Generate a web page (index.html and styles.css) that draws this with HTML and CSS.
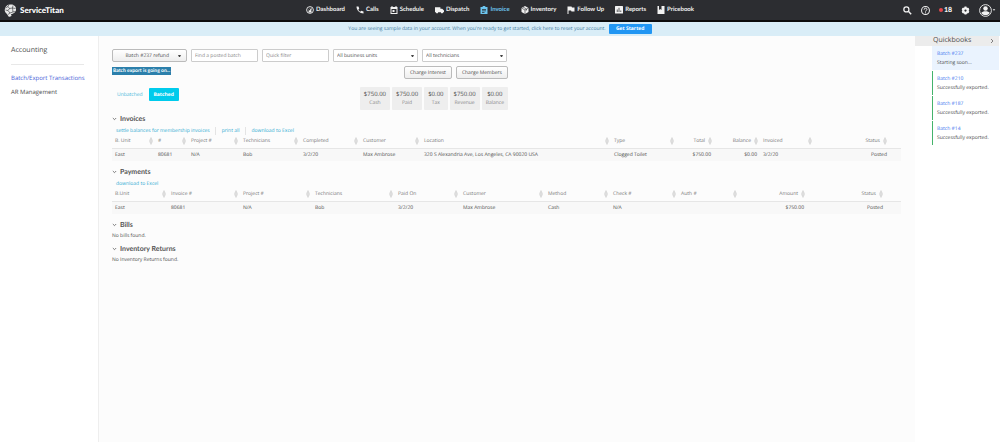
FILE: index.html
```html
<!DOCTYPE html>
<html lang="en">
<head>
<meta charset="utf-8">
<title>ServiceTitan – Batch/Export Transactions</title>
<link rel="stylesheet" href="styles.css">
</head>
<body>
<svg class="defs" aria-hidden="true">
  <symbol id="sort" viewBox="0 0 4 8"><path d="M2 0.5L3.500 3.500H.5zM2 7.500L.5 4.500H3.500z" fill="#ddd" stroke="#c4c4c4" stroke-width=".4"/></symbol>
  <symbol id="chev" viewBox="0 0 6 4"><path d="M1 .8L3 2.8 5 .8" fill="none" stroke="#555" stroke-width=".9"/></symbol>
</svg>
<header class="topbar">
  <a class="brand" href="#">
    <svg class="brand-mark" viewBox="0 0 26 26"><path d="M13 1C8 0 3 4 2 9c-2 5 1 9 4 11l3 5c3 1 6 0 6-2l-1-3c6 0 11-5 10-11C24 4 18 0 13 1z" fill="#e8e8e8"/><path d="M3 8l5-3 3 4-3 4-5-1M11 9l6-1 1-5M8 13l4 5 6-2-1-8M12 18l-4 3M18 16l5-1M8 5l2-4M17 8l6 1" fill="none" stroke="#2c2d31" stroke-width="1.2"/></svg>
    <span>ServiceTitan</span>
  </a>
  <nav class="mainnav">
    <a href="#"><svg viewBox="0 0 16 16"><circle cx="8" cy="8" r="6.8" fill="none" stroke="currentColor" stroke-width="1.8"/><path d="M4 8h2M8 4v2M12 8h-2M5 12.500h6L9.500 9 11 5 7 9z" fill="currentColor" stroke="currentColor"/></svg>Dashboard</a>
    <a href="#"><svg viewBox="0 0 16 16"><path d="M1 1h4l1.500 4.500-2 2c1 2 2.500 3 4 4l2-2L15 11v4C8 15 1 9 1 1z" fill="currentColor"/></svg>Calls</a>
    <a href="#"><svg viewBox="0 0 16 16"><path d="M1 2h2V0h2v2h6V0h2v2h2v14H1zM3 6v8h10V6zM5 8h4v4H5z" fill="currentColor" fill-rule="evenodd"/></svg>Schedule</a>
    <a href="#"><svg class="wide" viewBox="0 0 20 16"><path d="M0 2h12v3h4l4 4v4h-2a2.500 2.500 0 0 1-5 0H7a2.500 2.500 0 0 1-5 0H0z" fill="currentColor"/></svg>Dispatch</a>
    <a class="active" href="#" aria-current="page"><svg viewBox="0 0 16 16"><path d="M1 2h4c0-3 6-3 6 0h4v14H1zM4 6v1.500h8V6zM4 9v1.500h8V9zM4 12v1.500h5V12z" fill="currentColor" fill-rule="evenodd"/></svg>Invoice</a>
    <a href="#"><svg viewBox="0 0 16 16"><path d="M8 0l7 4v8l-7 4-7-4V4z" fill="currentColor"/><path d="M1 4l7 4 7-4M8 8v8M4 2l7 4v3" fill="none" stroke="#2c2d31" stroke-width="1.200"/></svg>Inventory</a>
    <a href="#"><svg viewBox="0 0 16 16"><path d="M1 1h8l1 2h5v8H9L8 9H3v7H1z" fill="currentColor"/></svg>Follow Up</a>
    <a href="#"><svg viewBox="0 0 16 16"><rect width="16" height="15" rx="1" fill="currentColor"/><path d="M4.500 12V7M8 12V3.500M11.500 12V9" stroke="#2c2d31" stroke-width="1.500"/></svg>Reports</a>
    <a href="#"><svg viewBox="0 0 16 16"><path d="M1 0h3v8l2.500-2L9 8V0h6v16H1z" fill="currentColor"/></svg>Pricebook</a>
  </nav>
  <div class="tools">
    <button aria-label="Search"><svg viewBox="0 0 16 16"><circle cx="6" cy="6" r="4.500" fill="none" stroke="currentColor" stroke-width="2.200"/><path d="M9.500 9.500l5 5" stroke="currentColor" stroke-width="2.600"/></svg></button>
    <button aria-label="Help"><svg viewBox="0 0 16 16"><circle cx="8" cy="8" r="7" fill="none" stroke="currentColor" stroke-width="1.800"/><path d="M5.500 6.500c0-3.500 5-3.500 5 0C10.500 8 8 8 8 10M8 11.300v1.700" fill="none" stroke="currentColor" stroke-width="1.700"/></svg></button>
    <button class="alerts" aria-label="Notifications"><i></i>18</button>
    <button aria-label="Settings"><svg viewBox="0 0 16 16"><circle cx="8" cy="8" r="4" fill="none" stroke="currentColor" stroke-width="4"/><path d="M8 1v3M8 12v3M2 4.500l2.500 1.500M11.500 10l2.500 1.500M2 11.500L4.500 10M11.500 6L14 4.500" stroke="currentColor" stroke-width="3.500"/></svg></button>
    <button class="user" aria-label="Account"><svg viewBox="0 0 26 26"><circle cx="13" cy="13" r="11.800" fill="none" stroke="currentColor" stroke-width="1.800"/><circle cx="13" cy="9" r="4.500" fill="currentColor"/><path d="M4.500 18c2-5 15-5 17 0-4 6-13 6-17 0z" fill="currentColor"/></svg><svg class="tiny" viewBox="0 0 6 4"><path d="M1 1h4L3 3z" fill="currentColor"/></svg></button>
  </div>
</header>
<div class="notice"><span>You are seeing sample data in your account. When you're ready to get started, click here to reset your account.</span><button>Get Started</button></div>
<div class="layout">
  <aside class="side">
    <h2>Accounting</h2>
    <nav><a class="current" href="#">Batch/Export Transactions</a><a href="#">AR Management</a></nav>
  </aside>
  <main>
    <div class="filters">
      <button class="btn batch">Batch #237 refund<i class="caret"></i></button>
      <input class="find" type="text" aria-label="Find a posted batch" placeholder="Find a posted batch">
      <input class="quick" type="text" aria-label="Quick filter" placeholder="Quick filter">
      <span class="pick"><select aria-label="Business units"><option>All business units</option></select><i class="caret"></i></span>
      <span class="pick"><select aria-label="Technicians"><option>All technicians</option></select><i class="caret"></i></span>
    </div>
    <div class="actions"><span class="badge">Batch export is going on...</span><div class="charge"><button class="btn">Charge Interest</button><button class="btn">Charge Members</button></div></div>
    <div class="summary">
      <div class="tabs"><button>Unbatched</button><button class="on">Batched</button></div>
      <dl class="totals">
        <div><dd>$750.00</dd><dt>Cash</dt></div><div><dd>$750.00</dd><dt>Paid</dt></div><div><dd>$0.00</dd><dt>Tax</dt></div><div><dd>$750.00</dd><dt>Revenue</dt></div><div><dd>$0.00</dd><dt>Balance</dt></div>
      </dl>
    </div>
    <section>
      <h3><svg><use href="#chev"/></svg>Invoices</h3>
      <div class="links"><a href="#">settle balances for membership invoices</a><a href="#">print all</a><a href="#">download to Excel</a></div>
      <table>
        <colgroup><col class="w43"><col class="w33"><col class="w52"><col class="w60"><col class="w60"><col class="w61"><col class="w190"><col class="w65"><col class="w38"><col class="w46"><col class="w54"><col></colgroup>
        <thead><tr><th><div>B. Unit<svg><use href="#sort"/></svg></div></th><th><div>#<svg><use href="#sort"/></svg></div></th><th><div>Project #<svg><use href="#sort"/></svg></div></th><th><div>Technicians<svg><use href="#sort"/></svg></div></th><th><div>Completed<svg><use href="#sort"/></svg></div></th><th><div>Customer<svg><use href="#sort"/></svg></div></th><th><div>Location<svg><use href="#sort"/></svg></div></th><th><div>Type<svg><use href="#sort"/></svg></div></th><th class="num"><div>Total<svg><use href="#sort"/></svg></div></th><th class="num"><div>Balance<svg><use href="#sort"/></svg></div></th><th><div>Invoiced<svg><use href="#sort"/></svg></div></th><th class="num last"><div>Status<svg><use href="#sort"/></svg></div></th></tr></thead>
        <tbody><tr><td>East</td><td>80681</td><td>N/A</td><td>Bob</td><td>3/2/20</td><td>Max Ambrose</td><td>320 S Alexandria Ave, Los Angeles, CA 90020 USA</td><td>Clogged Toilet</td><td class="num">$750.00</td><td class="num">$0.00</td><td>3/2/20</td><td class="num last">Posted</td></tr></tbody>
      </table>
    </section>
    <section>
      <h3><svg><use href="#chev"/></svg>Payments</h3>
      <div class="links"><a href="#">download to Excel</a></div>
      <table>
        <colgroup><col class="w56"><col class="w72"><col class="w72"><col class="w83"><col class="w65"><col class="w85"><col class="w65"><col class="w68"><col class="w61"><col class="w68"><col></colgroup>
        <thead><tr><th><div>B.Unit<svg><use href="#sort"/></svg></div></th><th><div>Invoice #<svg><use href="#sort"/></svg></div></th><th><div>Project #<svg><use href="#sort"/></svg></div></th><th><div>Technicians<svg><use href="#sort"/></svg></div></th><th><div>Paid On<svg><use href="#sort"/></svg></div></th><th><div>Customer<svg><use href="#sort"/></svg></div></th><th><div>Method<svg><use href="#sort"/></svg></div></th><th><div>Check #<svg><use href="#sort"/></svg></div></th><th><div>Auth #<svg><use href="#sort"/></svg></div></th><th class="num"><div>Amount<svg><use href="#sort"/></svg></div></th><th class="num end"><div>Status<svg><use href="#sort"/></svg></div></th></tr></thead>
        <tbody><tr><td>East</td><td>80681</td><td>N/A</td><td>Bob</td><td>3/2/20</td><td>Max Ambrose</td><td>Cash</td><td>N/A</td><td></td><td class="num">$750.00</td><td class="num end">Posted</td></tr></tbody>
      </table>
    </section>
    <section><h3><svg><use href="#chev"/></svg>Bills</h3><p>No bills found.</p></section>
    <section><h3><svg><use href="#chev"/></svg>Inventory Returns</h3><p>No Inventory Returns found.</p></section>
  </main>
  <aside class="books">
    <h2>Quickbooks<button aria-label="Collapse"><svg viewBox="0 0 4 6"><path d="M1 1l2 2-2 2" fill="none" stroke="#666" stroke-width=".8"/></svg></button></h2>
    <ul>
      <li class="pending"><a href="#">Batch #237</a><span>Starting soon...</span></li>
      <li><a href="#">Batch #210</a><span>Successfully exported.</span></li>
      <li><a href="#">Batch #187</a><span>Successfully exported.</span></li>
      <li><a href="#">Batch #14</a><span>Successfully exported.</span></li>
    </ul>
  </aside>
</div>
</body>
</html>
```
FILE: styles.css
```css
*{box-sizing:border-box}
body{margin:0;min-height:100vh;display:flex;flex-direction:column;background:#fcfcfc;color:#4c4c4c;font:5px/8px "Open Sans","Noto Sans",sans-serif;text-rendering:geometricPrecision}
button,input,select{font:inherit;color:inherit;margin:0;text-rendering:inherit}
button{padding:0;border:0;background:none;white-space:nowrap}
a{color:inherit;text-decoration:none}
h2,h3,p,dl,dd,dt,ul{margin:0;padding:0;font-weight:400}
.defs{position:absolute;width:0;height:0}
.topbar{height:22px;display:flex;align-items:center;justify-content:space-between;background:#2c2d31;border-bottom:2px solid #0c0c0d;color:#f2f2f2;padding:0 4px}
.brand{display:flex;align-items:center;gap:3px;flex:1;font:900 8px/12px Lato,sans-serif;color:#fff}
.brand-mark{width:13px;height:13px}
.mainnav{display:flex;gap:11px;font:700 6px/10px Lato,sans-serif}
.mainnav a{display:flex;align-items:center;gap:2px;white-space:nowrap}
.mainnav svg{width:8px;height:8px}
.mainnav .wide{width:9px}
.mainnav .active{color:#6cc5ef}
.tools{flex:1;display:flex;align-items:center;justify-content:flex-end;gap:9px}
.tools button{display:flex;align-items:center}
.tools svg{width:9px;height:9px}
.tools .alerts{font:900 7px/10px Lato,sans-serif;gap:1px}
.alerts i{width:4px;height:4px;border-radius:50%;background:#e5484d}
.tools .user svg{width:13px;height:13px}
.tools .user .tiny{width:4px;height:4px}
.notice{height:14px;display:flex;align-items:center;justify-content:center;gap:3px;background:#d9edf7;color:#3f7ba1}
.notice button{width:43px;height:10px;background:#2196f3;border-radius:1px;color:#fff;font-weight:700;line-height:8px}
.layout{flex:1;display:flex}
.side{width:99px;border-right:1px solid #eee;padding:9px 14px 0 11px;background:#fff;font-size:6px}
.side h2{font-size:7px;line-height:12px;padding-bottom:7px;border-bottom:1px solid #e8e8e8}
.side nav{display:flex;flex-direction:column;gap:4px;padding-top:8px;line-height:10px;white-space:nowrap}
.side .current{color:#4a5fd8}
main{flex:1;min-width:0;padding:13px 14px 0 13px}
.filters{display:flex;gap:4px}
.filters input,.pick select{width:100%;height:13px;border:1px solid #ccc;border-radius:1px;background:#fff;padding:0 3px;appearance:none}
.filters input::placeholder{color:#888;opacity:1}
.filters .find,.filters .quick{width:67px}
.btn{height:13px;padding:0 5px;border:1px solid #bbb;border-radius:2px;background:linear-gradient(#fff,#eee);line-height:8px}
.batch{width:75px;display:flex;align-items:center;justify-content:flex-end;gap:9px}
.caret{border:1px solid transparent;border-top:2px solid #444;border-bottom:0;width:3px}
.pick{display:flex;align-items:center;width:85px;position:relative}
.pick .caret{position:absolute;right:4px}
.actions{display:flex;justify-content:space-between;width:396px;padding-top:4px}
.badge{height:8px;margin-top:1px;padding:0 1px;background:#2b7fab;color:#fff;font-family:Lato,sans-serif;font-weight:700;line-height:8px;white-space:nowrap}
.charge{display:flex;gap:4px}
.summary{display:flex;justify-content:space-between;width:396px;padding:8px 0 2px}
.tabs{display:flex;gap:6px;color:#46b8da;padding:1px 0 0 5px}
.tabs button{height:13px}
.tabs .on{width:30px;background:#00cbec;color:#fff;font-weight:700;border-radius:1px}
.totals{display:flex;gap:2px}
.totals div{background:#eee;border-radius:1px;padding:3px 4px;height:23px;text-align:center;color:#888}
.totals dd{font-size:6px;line-height:9px;color:#4c4c4c}
section{display:flex;flex-direction:column}
h3{display:flex;align-items:center;gap:3px;font:700 7px/12px Lato,sans-serif;margin-top:1px;color:#555}
h3 svg{width:5px;height:4px}
.links{display:flex;padding:2px 0 0 4px;color:#2fabd2;line-height:8px}
.links a+a{border-left:1px solid #e4e4e4;margin-left:5px;padding-left:6px}
table{width:100%;table-layout:fixed;border-collapse:collapse;margin-bottom:4px}
th,td{padding:0 3px;text-align:left;white-space:nowrap;font-weight:400;height:13px;overflow:hidden}
th{color:#777;border-bottom:1px solid #e6e6e6;padding-right:2px}
td{background:#f8f8f8}
th div{display:flex;justify-content:space-between;align-items:center;gap:3px}
th svg{width:4px;height:8px;flex:none}
.num{text-align:right}
th.num div{justify-content:flex-end}
.last{padding-right:14px}
.end{padding-right:18px}
p{line-height:11px}
.books{width:85px;background:#fff;padding-right:1px}
.books h2{height:10px;display:flex;align-items:center;justify-content:space-between;background:#ececec;font-size:7px;padding:0 5px 0 18px}
.books h2 svg{display:block;width:4px;height:6px}
.books ul{list-style:none;padding:0 0 0 17px;display:flex;flex-direction:column;gap:1px}
.books li{display:flex;flex-direction:column;border-left:1px solid #45b36b;padding:4px 0 2px 4px;height:24px;line-height:9px;white-space:nowrap}
.books li.pending{background:#eaf3fe;border-color:#eaf3fe}
.books a{color:#3b76ee}
.w33{width:33px}.w38{width:38px}.w43{width:43px}.w46{width:46px}.w52{width:52px}.w54{width:54px}.w56{width:56px}.w60{width:60px}.w61{width:61px}.w65{width:65px}.w68{width:68px}.w72{width:72px}.w83{width:83px}.w85{width:85px}.w190{width:190px}
```
